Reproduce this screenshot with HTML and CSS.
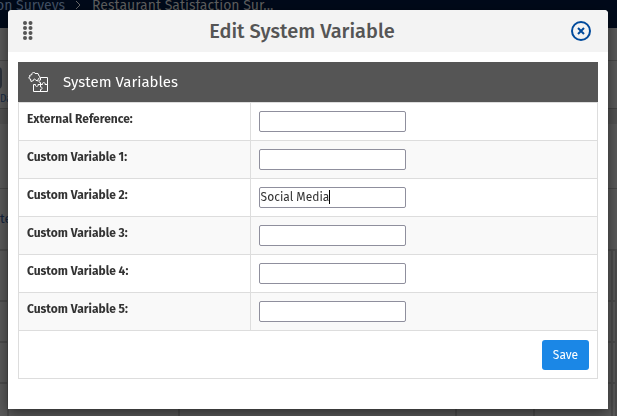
FILE: index.html
```html
<!DOCTYPE html>
<html lang="en">
<head>
    <meta charset="UTF-8">
    <meta name="viewport" content="width=device-width, initial-scale=1.0">
    <title>Edit System Variable</title>
    <link rel="stylesheet" href="styles.css">
</head>
<body>
    <!-- Survey page, dimmed behind the dialog -->
    <div class="page" aria-hidden="true">
        <div class="breadcrumb">
            <span class="crumb-parent">on Surveys</span>
            <svg class="crumb-arrow" viewBox="0 0 6 10"><path d="M1 1l4 4-4 4"/></svg>
            <span>Restaurant Satisfaction Sur...</span>
        </div>
        <div class="tabs"></div>
        <div class="toolbar">
            <svg class="tool-icon" viewBox="0 0 20 22">
                <rect x="1" y="1" width="18" height="20" rx="3"/>
                <path d="M1 8h18M1 14h18"/>
            </svg>
            <span>Data</span>
        </div>
        <div class="toolbar-gap"></div>
        <div class="summary"></div>
        <div class="subtitle">te</div>
        <table class="results">
            <colgroup>
                <col class="col-id"><col class="col-name"><col class="col-wide"><col class="col-count"><col class="col-count"><col>
            </colgroup>
            <tr class="results-head"><td></td><td></td><td></td><td></td><td></td><td></td></tr>
            <tr><td></td><td></td><td></td><td></td><td></td><td></td></tr>
            <tr><td></td><td></td><td></td><td></td><td></td><td></td></tr>
            <tr><td></td><td></td><td></td><td></td><td></td><td></td></tr>
        </table>
    </div>

    <div class="overlay">
        <form class="dialog" role="dialog" aria-labelledby="dialog-title">
            <header class="dialog-header">
                <svg class="drag-handle" viewBox="0 0 10 20">
                    <circle cx="2" cy="2" r="2"/><circle cx="7.500" cy="2" r="2"/>
                    <circle cx="2" cy="7" r="2"/><circle cx="7.500" cy="7" r="2"/>
                    <circle cx="2" cy="12" r="2"/><circle cx="7.500" cy="12" r="2"/>
                    <circle cx="2" cy="17" r="2"/><circle cx="7.500" cy="17" r="2"/>
                </svg>
                <h1 class="dialog-title" id="dialog-title">Edit System Variable</h1>
                <button class="close-button" type="button" aria-label="Close">
                    <svg viewBox="0 0 20 20">
                        <circle cx="10" cy="10" r="9"/>
                        <path class="cross" d="M7 7l6 6M13 7l-6 6"/>
                    </svg>
                </button>
            </header>

            <div class="dialog-body">
                <div class="section-header">
                    <svg class="puzzle-icon" viewBox="0 0 20 20">
                        <path d="M12.500 5.500H19.500V19.500H5.500V12.500H7.500C6.500 15 11 15 10 12.500H12.500"/>
                        <path d="M12.500 5.500V8C10.500 7.500 10.500 11 12.500 10.500V15C14.500 14.500 14.500 18 12.500 17.500V19.500"/>
                        <path d="M12.500 12.500H14.500C13.500 10 18 10 17 12.500H19.500"/>
                        <path d="M1.500 3.500L4 2.500C3.500 0 7 -.5 7 1.500L10 1.500L11 4C12.500 4.500 12 6.500 10.500 6.500L9.500 9L7.500 8C7 6.500 5 7 5.500 8.500L3 9.500L2.500 7C.5 7 0 5 2 5Z"/>
                    </svg>
                    <h2 class="section-title">System Variables</h2>
                </div>
                <table class="variables">
                    <colgroup><col class="col-label"><col></colgroup>
                    <tbody>
                        <tr>
                            <th scope="row"><label for="external-reference">External Reference:</label></th>
                            <td><input type="text" id="external-reference"></td>
                        </tr>
                        <tr>
                            <th scope="row"><label for="custom-1">Custom Variable 1:</label></th>
                            <td><input type="text" id="custom-1"></td>
                        </tr>
                        <tr>
                            <th scope="row"><label for="custom-2">Custom Variable 2:</label></th>
                            <td>
                                <div class="field">
                                    <input type="text" id="custom-2" value="Social Media">
                                    <span class="caret"></span>
                                </div>
                            </td>
                        </tr>
                        <tr>
                            <th scope="row"><label for="custom-3">Custom Variable 3:</label></th>
                            <td><input type="text" id="custom-3"></td>
                        </tr>
                        <tr>
                            <th scope="row"><label for="custom-4">Custom Variable 4:</label></th>
                            <td><input type="text" id="custom-4"></td>
                        </tr>
                        <tr>
                            <th scope="row"><label for="custom-5">Custom Variable 5:</label></th>
                            <td><input type="text" id="custom-5"></td>
                        </tr>
                    </tbody>
                    <tfoot>
                        <tr>
                            <td class="actions" colspan="2"><button class="save-button" type="submit">Save</button></td>
                        </tr>
                    </tfoot>
                </table>
            </div>
        </form>
    </div>
</body>
</html>
```
FILE: styles.css
```css
* {
    margin: 0;
    padding: 0;
    box-sizing: border-box;
}

body {
    font-family: 'Fira Sans', Roboto, 'Noto Sans', sans-serif;
    font-size: 12px;
    color: #333;
    background: #5a5a5a;
    height: 100vh;
    overflow: hidden;
}

/* Page behind the dialog */
.page {
    height: 100vh;
    overflow: hidden;
}

.breadcrumb {
    display: flex;
    align-items: flex-start;
    height: 28px;
    margin-left: -4px;
    background: #000a1a;
    color: #5f5f5f;
    font-size: 14px;
    line-height: 12px;
}

.crumb-parent {
    color: #445266;
}

.crumb-arrow {
    width: 6px;
    height: 10px;
    margin: 0 11px 0 10px;
    fill: none;
    stroke: #6a6a6a;
}

.tabs {
    height: 33px;
    border-bottom: 1px solid #484848;
}

.toolbar {
    height: 47px;
    padding-top: 6px;
    color: #172a45;
    font-size: 10px;
    line-height: 20px;
}

.tool-icon {
    display: block;
    width: 20px;
    height: 22px;
    margin-left: -18px;
    fill: none;
    stroke: #2c333d;
    stroke-width: 2;
}

.toolbar-gap {
    height: 16px;
    background: #525252;
    border-top: 1px solid #444;
}

.summary {
    height: 65px;
    border-bottom: 1px solid #484848;
}

.subtitle {
    height: 60px;
    color: #14253f;
    font-size: 13px;
    line-height: 60px;
}

.results {
    width: 100%;
    table-layout: fixed;
    border-collapse: collapse;
}

.results td {
    height: 41px;
    border: 2px solid #4c4c4c;
    border-left: none;
}

.results .results-head td {
    height: 51px;
}

.col-id {
    width: 8px;
}

.col-name {
    width: 171px;
}

.col-wide {
    width: 277px;
}

.col-count {
    width: 78px;
}

/* Dialog */
.overlay {
    position: fixed;
    inset: 0;
    padding: 10px 9px 7px 8px;
}

.dialog {
    background: #fff;
    border-radius: 4px 4px 0 0;
    box-shadow: 0 4px 14px rgba(0, 0, 0, 0.5);
}

.dialog-header {
    display: flex;
    align-items: center;
    justify-content: space-between;
    height: 42px;
    padding: 0 17px 0 15px;
    background: #f3f3f3;
    border-radius: 4px 4px 0 0;
}

.drag-handle {
    width: 10px;
    height: 20px;
    fill: #555;
}

.dialog-title {
    color: #555;
    font-size: 20px;
    font-weight: 500;
    line-height: 24px;
}

.close-button {
    width: 20px;
    height: 20px;
    border: none;
    background: none;
    cursor: pointer;
}

.close-button svg {
    display: block;
    fill: none;
    stroke: #004a9c;
    stroke-width: 2;
}

.dialog-body {
    padding: 10px 10px 30px;
}

.section-header {
    display: flex;
    align-items: center;
    gap: 15px;
    height: 40px;
    padding: 0 10px;
    background: #555;
    color: #fff;
}

.puzzle-icon {
    width: 20px;
    height: 20px;
    fill: none;
    stroke: #fff;
    stroke-width: 1;
}

.section-title {
    font-size: 15px;
    font-weight: 400;
    line-height: 20px;
}

.variables {
    width: 100%;
    table-layout: fixed;
    border-collapse: collapse;
}

.col-label {
    width: 40%;
}

.variables th,
.variables td {
    padding: 8px;
    border: 1px solid #ddd;
    text-align: left;
    vertical-align: top;
}

.variables th {
    font-weight: 700;
    line-height: 16px;
}

.variables tbody tr:nth-child(even) {
    background: #f9f9f9;
}

.variables input {
    display: block;
    width: 147px;
    height: 21px;
    padding: 0 1px 1px;
    border: 1px solid #8f8f9d;
    border-radius: 2px;
    background: #fff;
    color: #333;
    font-family: inherit;
    font-size: 12px;
}

.field {
    position: relative;
    width: 147px;
}

.caret {
    position: absolute;
    top: 3px;
    left: 70px;
    width: 1px;
    height: 14px;
    background: #000;
}

.variables .actions {
    padding-top: 9px;
    text-align: right;
}

.save-button {
    width: 47px;
    height: 30px;
    border: none;
    border-radius: 3px;
    background: #1b87e6;
    color: #fff;
    font-family: inherit;
    font-size: 12px;
    font-weight: 400;
    vertical-align: top;
    cursor: pointer;
}
```
